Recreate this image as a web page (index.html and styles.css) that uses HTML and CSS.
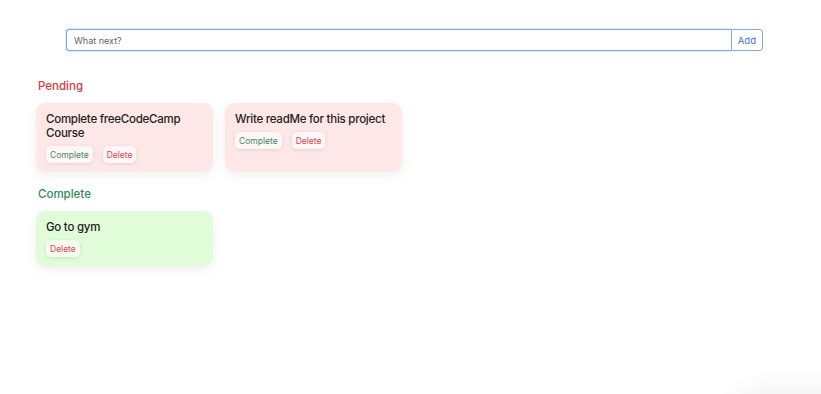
FILE: index.html
```html
<!DOCTYPE html>
<html lang="en">
<head>
    <meta charset="UTF-8">
    <meta name="viewport" content="width=device-width, initial-scale=1.0">
    <title>Todo</title>
    <link rel="stylesheet" href="styles.css">
</head>
<body>
    <div class="app">
        <form class="add-form">
            <input class="add-input" type="text" placeholder="What next?">
            <button class="add-btn" type="button">Add</button>
        </form>

        <h2 class="section-title pending">Pending</h2>
        <div class="list">
            <div class="card card-pending">
                <div class="card-title">Complete freeCodeCamp Course</div>
                <div class="actions">
                    <button class="btn btn-complete">Complete</button>
                    <button class="btn btn-delete">Delete</button>
                </div>
            </div>
            <div class="card card-pending">
                <div class="card-title">Write readMe for this project</div>
                <div class="actions">
                    <button class="btn btn-complete">Complete</button>
                    <button class="btn btn-delete">Delete</button>
                </div>
            </div>
        </div>

        <h2 class="section-title done">Complete</h2>
        <div class="list">
            <div class="card card-done">
                <div class="card-title">Go to gym</div>
                <div class="actions">
                    <button class="btn btn-delete">Delete</button>
                </div>
            </div>
        </div>
    </div>
    <div class="corner-shadow"></div>
</body>
</html>
```
FILE: styles.css
```css
body {
    margin: 0;
    font-family: Inter, "Noto Sans", sans-serif;
    background: #fff;
    color: #212529;
    overflow: hidden;
}
.app {
    padding: 29px 36px;
}
.add-form {
    display: flex;
    width: 697px;
    margin: 0 0 0 30px;
}
.add-input {
    flex: 1;
    height: 22px;
    box-sizing: border-box;
    border: 1px solid #86a8ee;
    border-right: none;
    border-radius: 3px 0 0 3px;
    padding: 0 7px;
    font-family: inherit;
    font-size: 9px;
    color: #495057;
    box-shadow: 0 0 0 1px rgba(134, 168, 238, 0.25);
    outline: none;
}
.add-input::placeholder {
    color: #5f6368;
}
.add-btn {
    height: 22px;
    box-sizing: border-box;
    border: 1px solid #86a8ee;
    border-radius: 0 3px 3px 0;
    background: #fff;
    color: #3b6fe0;
    font-family: inherit;
    font-size: 9.5px;
    padding: 0 6px;
}
.section-title {
    font-size: 11.5px;
    font-weight: 500;
    margin: 28px 2px 10px;
    line-height: 14px;
}
.pending {
    color: #dc3545;
}
.done {
    color: #2e8b57;
    margin-top: 15px;
}
.list {
    display: flex;
    gap: 12px;
}
.card {
    width: 177px;
    box-sizing: border-box;
    padding: 9px 10px 9px;
    border-radius: 9px;
    box-shadow: 0 3px 12px rgba(0, 0, 0, 0.07);
}
.card-pending {
    background: #fee7e7;
}
.card-done {
    background: #e1fcd8;
}
.card-title {
    font-size: 11.5px;
    font-weight: 500;
    letter-spacing: -0.25px;
    line-height: 14px;
    color: #222;
}
.actions {
    display: flex;
    gap: 10px;
    margin-top: 6px;
}
.btn {
    font-family: inherit;
    font-size: 8.5px;
    height: 17px;
    padding: 0 4px;
    border: none;
    border-radius: 5px;
    background: rgba(255, 255, 255, 0.65);
    box-shadow: 0 1px 4px rgba(0, 0, 0, 0.1);
}
.btn-complete {
    color: #3d8a5b;
}
.btn-delete {
    color: #d94452;
}
.corner-shadow {
    position: fixed;
    right: -40px;
    bottom: -40px;
    width: 120px;
    height: 40px;
    box-shadow: 0 0 30px rgba(0, 0, 0, 0.08);
}
```
